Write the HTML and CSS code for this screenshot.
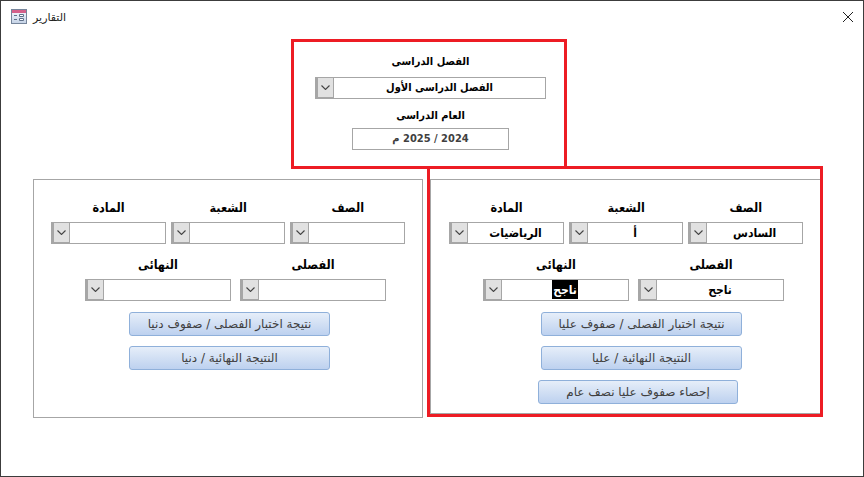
FILE: index.html
```html
<!DOCTYPE html>
<html lang="ar">

<head>
    <meta charset="UTF-8">
    <meta name="viewport" content="width=device-width, initial-scale=1.0">
    <title>التقارير</title>
    <link rel="stylesheet" href="styles.css">
</head>

<body>
    <div class="window">
        <header class="titlebar">
            <svg class="report-icon" width="16" height="16" viewBox="0 0 16 16">
                <defs>
                    <linearGradient id="icon-body" x1="0" y1="0" x2="0" y2="1">
                        <stop offset="0" stop-color="#fafcff" />
                        <stop offset="1" stop-color="#c4d2e6" />
                    </linearGradient>
                </defs>
                <rect x="0.5" y="0.5" width="15" height="14" fill="url(#icon-body)" stroke="#76859b" />
                <rect x="1" y="1" width="14" height="3" fill="#d4608a" />
                <path d="M3 6.5h3M3 10.5h3" stroke="#5f7088" fill="none" />
                <path d="M8.5 5.5h4v2h-4zM8.5 9.5h4v2h-4z" fill="#fff" stroke="#5f7088" />
            </svg>
            <span class="title-text" dir="rtl">التقارير</span>
            <svg class="close-icon" width="10" height="10" viewBox="0 0 10 10">
                <path d="M0 0L10 10M10 0L0 10" stroke="#222" stroke-width="1" fill="none" />
            </svg>
        </header>

        <!-- الفصل والعام -->
        <section class="term-box" dir="rtl">
            <div class="label">الفصل الدراسى</div>
            <div class="combo combo-term">
                <span class="combo-value">الفصل الدراسى الأول</span>
                <span class="combo-btn"><svg width="9" height="5" viewBox="0 0 9 5"><path d="M0.5 0.5L4.5 4.5L8.5 0.5" /></svg></span>
            </div>
            <div class="label label-year">العام الدراسى</div>
            <div class="year-field">2024 / 2025 م</div>
        </section>

        <div class="panels">
            <!-- صفوف دنيا -->
            <section class="panel panel-lower" dir="rtl">
                <div class="row">
                    <div class="field">
                        <div class="label">الصف</div>
                        <div class="combo"><span class="combo-value"></span><span class="combo-btn"><svg width="9" height="5" viewBox="0 0 9 5"><path d="M0.5 0.5L4.5 4.5L8.5 0.5" /></svg></span></div>
                    </div>
                    <div class="field">
                        <div class="label">الشعبة</div>
                        <div class="combo"><span class="combo-value"></span><span class="combo-btn"><svg width="9" height="5" viewBox="0 0 9 5"><path d="M0.5 0.5L4.5 4.5L8.5 0.5" /></svg></span></div>
                    </div>
                    <div class="field">
                        <div class="label">المادة</div>
                        <div class="combo"><span class="combo-value"></span><span class="combo-btn"><svg width="9" height="5" viewBox="0 0 9 5"><path d="M0.5 0.5L4.5 4.5L8.5 0.5" /></svg></span></div>
                    </div>
                </div>
                <div class="row row-results">
                    <div class="field">
                        <div class="label">الفصلى</div>
                        <div class="combo combo-wide"><span class="combo-value"></span><span class="combo-btn"><svg width="9" height="5" viewBox="0 0 9 5"><path d="M0.5 0.5L4.5 4.5L8.5 0.5" /></svg></span></div>
                    </div>
                    <div class="field">
                        <div class="label">النهائى</div>
                        <div class="combo combo-wide"><span class="combo-value"></span><span class="combo-btn"><svg width="9" height="5" viewBox="0 0 9 5"><path d="M0.5 0.5L4.5 4.5L8.5 0.5" /></svg></span></div>
                    </div>
                </div>
                <div class="actions">
                    <button class="btn">نتيجة اختبار الفصلى / صفوف دنيا</button>
                    <button class="btn">النتيجة النهائية / دنيا</button>
                </div>
            </section>

            <!-- صفوف عليا -->
            <div class="highlight">
                <section class="panel panel-upper" dir="rtl">
                    <div class="row">
                        <div class="field">
                            <div class="label">الصف</div>
                            <div class="combo"><span class="combo-value">السادس</span><span class="combo-btn"><svg width="9" height="5" viewBox="0 0 9 5"><path d="M0.5 0.5L4.5 4.5L8.5 0.5" /></svg></span></div>
                        </div>
                        <div class="field">
                            <div class="label">الشعبة</div>
                            <div class="combo"><span class="combo-value">أ</span><span class="combo-btn"><svg width="9" height="5" viewBox="0 0 9 5"><path d="M0.5 0.5L4.5 4.5L8.5 0.5" /></svg></span></div>
                        </div>
                        <div class="field">
                            <div class="label">المادة</div>
                            <div class="combo"><span class="combo-value">الرياضيات</span><span class="combo-btn"><svg width="9" height="5" viewBox="0 0 9 5"><path d="M0.5 0.5L4.5 4.5L8.5 0.5" /></svg></span></div>
                        </div>
                    </div>
                    <div class="row row-results">
                        <div class="field">
                            <div class="label">الفصلى</div>
                            <div class="combo combo-wide"><span class="combo-value">ناجح</span><span class="combo-btn"><svg width="9" height="5" viewBox="0 0 9 5"><path d="M0.5 0.5L4.5 4.5L8.5 0.5" /></svg></span></div>
                        </div>
                        <div class="field">
                            <div class="label">النهائى</div>
                            <div class="combo combo-wide"><span class="combo-value"><span class="selected">ناجح</span></span><span class="combo-btn"><svg width="9" height="5" viewBox="0 0 9 5"><path d="M0.5 0.5L4.5 4.5L8.5 0.5" /></svg></span></div>
                        </div>
                    </div>
                    <div class="actions">
                        <button class="btn">نتيجة اختبار الفصلى / صفوف عليا</button>
                        <button class="btn">النتيجة النهائية / عليا</button>
                        <button class="btn btn-stats">إحصاء صفوف عليا نصف عام</button>
                    </div>
                </section>
            </div>
        </div>
    </div>
</body>

</html>
```

FILE: styles.css
```css
html,
body {
    margin: 0;
    padding: 0;
    background-color: #fff;
}

body {
    font-family: "DejaVu Sans", "Noto Sans", sans-serif;
    color: #000;
    overflow: hidden;
}

.window {
    width: 864px;
    height: 477px;
    box-sizing: border-box;
    border: 1px solid #3c3c3c;
    background-color: #fff;
}

.titlebar {
    height: 38px;
    display: flex;
    align-items: center;
    box-sizing: border-box;
    padding: 0 10px 6px 10px;
}

.report-icon {
    flex: none;
}

.title-text {
    margin-left: 6px;
    font-size: 11px;
    color: #222;
}

.close-icon {
    margin-left: auto;
    margin-right: 0;
}

/* الصناديق الحمراء */
.term-box {
    width: 276px;
    height: 130px;
    box-sizing: border-box;
    margin-left: 290px;
    padding: 12px 0 0 3px;
    border: 3px solid #ed1c24;
    display: flex;
    flex-direction: column;
    align-items: center;
}

.highlight {
    width: 396px;
    height: 251px;
    box-sizing: border-box;
    margin-top: -3px;
    padding-top: 10px;
    border: 3px solid #ed1c24;
}

.label {
    height: 16px;
    line-height: 16px;
    font-size: 11px;
    font-weight: bold;
    font-stretch: condensed;
    text-align: center;
    margin-bottom: 6px;
}

.panel .label {
    font-size: 12.5px;
}

.term-box .label {
    margin-bottom: 7px;
}

.term-box .label-year {
    margin-top: 9px;
    margin-bottom: 4px;
}

.year-field {
    width: 157px;
    height: 22px;
    box-sizing: border-box;
    border: 1px solid #a6a6a6;
    line-height: 20px;
    text-align: center;
    font-size: 11px;
    font-weight: bold;
    font-stretch: condensed;
    color: #404040;
}

.panels {
    display: flex;
    align-items: flex-start;
    gap: 4px;
    margin-left: 32px;
}

.panel {
    width: 390px;
    box-sizing: border-box;
    border: 1px solid #a6a6a6;
    padding: 20px 17px 0 0;
}

.panel-lower {
    height: 239px;
    margin-top: 10px;
}

.panel-upper {
    height: 235px;
    border-right: none;
}

.row {
    display: flex;
    gap: 5px;
}

.row-results {
    gap: 9px;
    margin-top: 13px;
    margin-right: 19px;
}

.combo {
    width: 114.6px;
    height: 22px;
    box-sizing: border-box;
    display: flex;
    border: 1px solid #a6a6a6;
    background-color: #fff;
}

.combo-wide {
    width: 146px;
}

.combo-term {
    width: 231px;
}

.combo-value {
    flex: 1;
    line-height: 20px;
    text-align: center;
    font-size: 11px;
    font-weight: bold;
    font-stretch: condensed;
    white-space: nowrap;
}

.panel .combo-value {
    font-size: 12px;
}

.selected {
    display: inline-block;
    height: 19px;
    padding: 0 1.5px;
    background-color: #000;
    color: #fff;
}

.combo-btn {
    flex: none;
    width: 18px;
    box-sizing: border-box;
    display: flex;
    align-items: center;
    justify-content: center;
    background-color: #e1e1e1;
    border-style: solid;
    border-color: #a6a6a6;
    border-width: 0 1px 1px 2px;
}

.combo-btn svg path {
    fill: none;
    stroke: #444;
    stroke-width: 1.1;
}

.actions {
    display: flex;
    flex-direction: column;
    align-items: flex-start;
    gap: 10px;
    margin-top: 11px;
    margin-right: 61px;
}

.panel-lower .actions {
    margin-right: 75px;
}

.btn {
    width: 201px;
    height: 24px;
    padding: 0;
    border: 1px solid #8fb0da;
    border-radius: 3px;
    background: linear-gradient(#e6eef9, #bdd1ef);
    color: #404040;
    font-family: "DejaVu Sans", "Noto Sans", sans-serif;
    font-size: 12px;
}

.btn-stats {
    width: 200px;
    margin-right: 4px;
}
```
